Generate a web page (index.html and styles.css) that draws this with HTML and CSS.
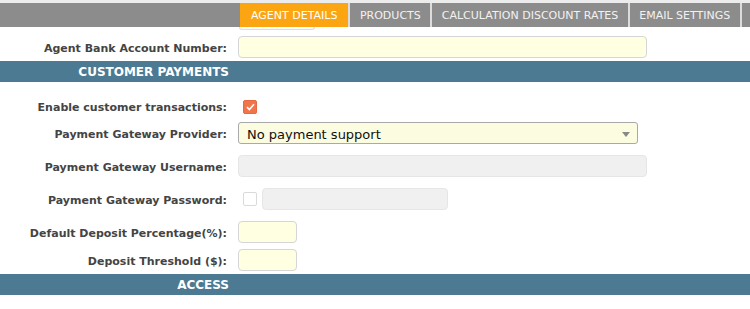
FILE: index.html
```html
<!DOCTYPE html>
<html lang="en">
<head>
    <meta charset="UTF-8">
    <meta name="viewport" content="width=device-width, initial-scale=1.0">
    <title>Agent Details</title>
<link rel="stylesheet" href="styles.css">
</head>
<body>
    <div id="tabs">
        <span class="tab aktif">AGENT DETAILS</span>
        <span class="tab">PRODUCTS</span>
        <span class="tab">CALCULATION DISCOUNT RATES</span>
        <span class="tab">EMAIL SETTINGS</span>
        <span class="tab sisa"></span>
    </div>
    <div class="potong"></div>

    <div class="row r-bank">
        <label>Agent Bank Account Number:</label>
        <input type="text" class="kuning lebar">
    </div>

    <div class="judul"><span>CUSTOMER PAYMENTS</span></div>

    <div class="row r-enable">
        <label>Enable customer transactions:</label>
        <span class="cek on">
            <svg width="9" height="8" viewBox="0 0 9 8"><path d="M1 4.2 L3.4 6.5 L8 1.2" fill="none" stroke="#fff" stroke-width="1.6"/></svg>
        </span>
    </div>
    <div class="row r-provider">
        <label>Payment Gateway Provider:</label>
        <div class="pilih">No payment support<i class="panah"></i></div>
    </div>
    <div class="row">
        <label>Payment Gateway Username:</label>
        <input type="text" class="mati lebar" disabled>
    </div>
    <div class="row">
        <label>Payment Gateway Password:</label>
        <span class="cek"></span>
        <input type="password" class="mati sedang" disabled>
    </div>
    <div class="row">
        <label>Default Deposit Percentage(%):</label>
        <input type="text" class="kuning kecil">
    </div>
    <div class="row r-threshold">
        <label>Deposit Threshold ($):</label>
        <input type="text" class="kuning kecil">
    </div>

    <div class="judul akses"><span>ACCESS</span></div>
</body>
</html>
```

FILE: styles.css
```css
*{
    padding: 0;
    margin: 0;
    box-sizing: border-box;
}
body{
    font-family: "DejaVu Sans", Verdana, sans-serif;
    background: #fff;
    width: 750px;
    border-top: 3px solid #ececec;
}
#tabs{
    display: flex;
    height: 24px;
    background: #8c8c8c;
    padding-left: 240px;
    overflow: hidden;
}
.tab{
    display: flex;
    align-items: center;
    flex-shrink: 0;
    white-space: nowrap;
    padding: 0 9.5px;
    font-size: 11px;
    color: #f2f2f2;
    border-right: 2px solid #dcdcdc;
}
.tab.aktif{
    padding: 0 11px;
    background: #fca512;
    color: #fff;
}
.tab.sisa{
    padding: 0;
    border: none;
}
.potong{/* bawah input yang terpotong */
    width: 76px;
    height: 3px;
    margin-left: 239px;
    border: 1px solid #ddd;
    border-top: none;
    border-radius: 0 0 5px 5px;
}
.row{
    display: flex;
    align-items: center;
    min-height: 22px;
    margin-top: 11px;
}
.row label{
    width: 227px;
    padding-top: 3px;
    text-align: right;
    font-size: 11px;
    font-weight: bold;
    color: #444;
    margin-right: 11px;
}
input{
    height: 22px;
    border-radius: 4px;
    font-family: inherit;
    font-size: 13px;
    outline: none;
}
.kuning{
    background: #ffffe2;
    border: 1px solid #d6d6d6;
}
.mati{
    background: #f0f0f0;
    border: 1px solid #e6e6e6;
}
.lebar{ width: 409px; }
.sedang{ width: 186px; }
.kecil{ width: 59px; }
.r-bank{
    margin-top: 6px;
    margin-bottom: 3px;
}
.r-enable{
    margin-top: 13px;
}
.r-provider{
    margin-top: 5px;
}
.r-threshold{
    margin-top: 6px;
}
.cek{
    width: 14px;
    height: 14px;
    margin-left: 5px;
    border: 1px solid #dadada;
    border-radius: 2px;
    background: #fff;
    display: flex;
    align-items: center;
    justify-content: center;
}
.cek.on{
    background: #f0754a;
    border-color: #e8693f;
    margin-top: 2px;
}
.cek + input{
    margin-left: 5px;
}
.pilih{
    position: relative;
    width: 400px;
    height: 22px;
    background: #fcfce0;
    border: 1px solid #a9a9a9;
    border-radius: 3px;
    font-size: 13px;
    color: #111;
    line-height: 17px;
    padding: 3px 0 0 8px;
}
.panah{
    position: absolute;
    right: 7px;
    top: 9px;
    border-left: 4px solid transparent;
    border-right: 4px solid transparent;
    border-top: 5px solid #888;
}
.judul{
    height: 21px;
    background: #4c7a93;
    color: #fff;
    font-size: 12px;
    font-weight: bold;
    line-height: 22px;
}
.judul span{
    display: block;
    width: 229px;
    text-align: right;
}
.akses{
    margin-top: 3px;
}
```
